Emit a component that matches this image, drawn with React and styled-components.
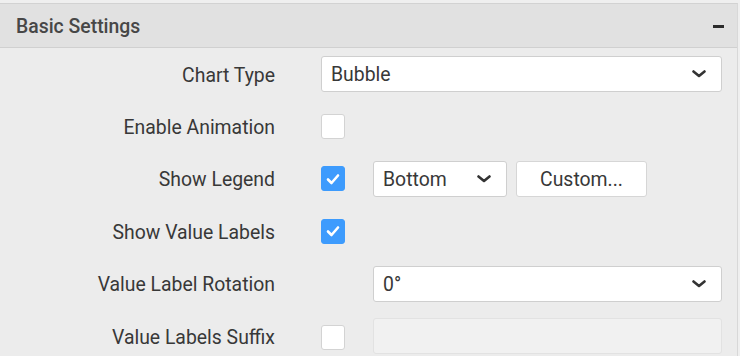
import React from "react";
import styled, { createGlobalStyle } from "styled-components";

const Global = createGlobalStyle`
  html, body { margin: 0; padding: 0; background: #efefef; }
  body { font-family: Roboto, "Noto Sans", sans-serif; color: #333; }
  * { box-sizing: border-box; }
`;

const Panel = styled.div`
  width: 738px;
  margin-top: 3px;
  border-top: 1px solid #d2d2d2;
  border-right: 1px solid #d8d8d8;
  background: #ececec;
  height: 353px;
  overflow: hidden;
`;

const Header = styled.div`
  height: 44px;
  background: #e1e1e1;
  border-bottom: 1px solid #d0d0d0;
  display: flex;
  align-items: center;
  justify-content: space-between;
  padding: 2px 13px 0 16px;
`;

const Title = styled.div`
  font-size: 19.4px;
  font-weight: 500;
  color: #474747;
`;

const Minus = styled.span`
  width: 11px;
  height: 3px;
  background: #2b2b2b;
`;

const Body = styled.div`
  display: grid;
  grid-template-columns: 275px 1fr;
  grid-auto-rows: 52.4px;
  column-gap: 46px;
  padding-right: 15px;
`;

const Label = styled.div`
  font-size: 19.4px;
  color: #383838;
  text-align: right;
  display: flex;
  align-items: center;
  justify-content: flex-end;
  padding-top: 2px;
`;

const Controls = styled.div`
  display: flex;
  align-items: center;
  gap: ${(p) => p.$gap ?? 28}px;
`;

const Slot = styled.div`
  width: 24px;
  flex: none;
`;

const Select = styled.div`
  height: 36px;
  width: ${(p) => (p.$w ? `${p.$w}px` : "auto")};
  flex: ${(p) => (p.$w ? "none" : "1")};
  background: #fff;
  border: 1px solid #cfcfcf;
  border-radius: 3px;
  display: flex;
  align-items: center;
  justify-content: space-between;
  padding: 1px 15px 0 9px;
  font-size: 19.4px;
  color: #383838;
  margin-top: ${(p) => p.$dy ?? 0}px;
`;

const Button = styled.div`
  height: 36px;
  width: 131px;
  background: #fff;
  border: 1px solid #d6d6d6;
  border-radius: 3px;
  display: flex;
  align-items: center;
  justify-content: center;
  padding-top: 1px;
  font-size: 19.4px;
  color: #383838;
`;

const Box = styled.div`
  width: 24px;
  height: 25px;
  flex: none;
  border-radius: 3px;
  background: ${(p) => (p.$on ? "#3d9bfd" : "#fff")};
  border: 1px solid ${(p) => (p.$on ? "#3d9bfd" : "#d3d3d3")};
  display: flex;
  align-items: center;
  justify-content: center;
  margin-top: ${(p) => p.$dy ?? 0}px;
`;

const Input = styled.div`
  flex: 1;
  height: 36px;
  background: #f1f1f1;
  border: 1px solid #e2e2e2;
  border-radius: 3px;
`;

const Chevron = () => (
  <svg width="14" height="8" viewBox="0 0 14 8">
    <path d="M1.5 1.5 L7 6 L12.5 1.5" fill="none" stroke="#333" strokeWidth="2.6" strokeLinecap="round" strokeLinejoin="round" />
  </svg>
);

const Check = ({ on, dy }) => (
  <Box $on={on} $dy={dy}>
    {on && (
      <svg width="14" height="12" viewBox="0 0 14 12">
        <path d="M2 6.5 L5.5 10 L12 2.5" fill="none" stroke="#fff" strokeWidth="2.6" strokeLinecap="round" strokeLinejoin="round" />
      </svg>
    )}
  </Box>
);

export default function App() {
  return (
    <>
      <Global />
      <Panel>
        <Header>
          <Title>Basic Settings</Title>
          <Minus />
        </Header>
        <Body>
          <Label>Chart Type</Label>
          <Controls>
            <Select $dy={-1}>
              Bubble
              <Chevron />
            </Select>
          </Controls>

          <Label>Enable Animation</Label>
          <Controls>
            <Check />
          </Controls>

          <Label>Show Legend</Label>
          <Controls>
            <Check on />
            <Controls $gap={9}>
              <Select $w={134}>
                Bottom
                <Chevron />
              </Select>
              <Button>Custom...</Button>
            </Controls>
          </Controls>

          <Label>Show Value Labels</Label>
          <Controls>
            <Check on />
          </Controls>

          <Label>Value Label Rotation</Label>
          <Controls>
            <Slot />
            <Select>
              0°
              <Chevron />
            </Select>
          </Controls>

          <Label>Value Labels Suffix</Label>
          <Controls>
            <Check dy={2} />
            <Input />
          </Controls>
        </Body>
      </Panel>
    </>
  );
}
